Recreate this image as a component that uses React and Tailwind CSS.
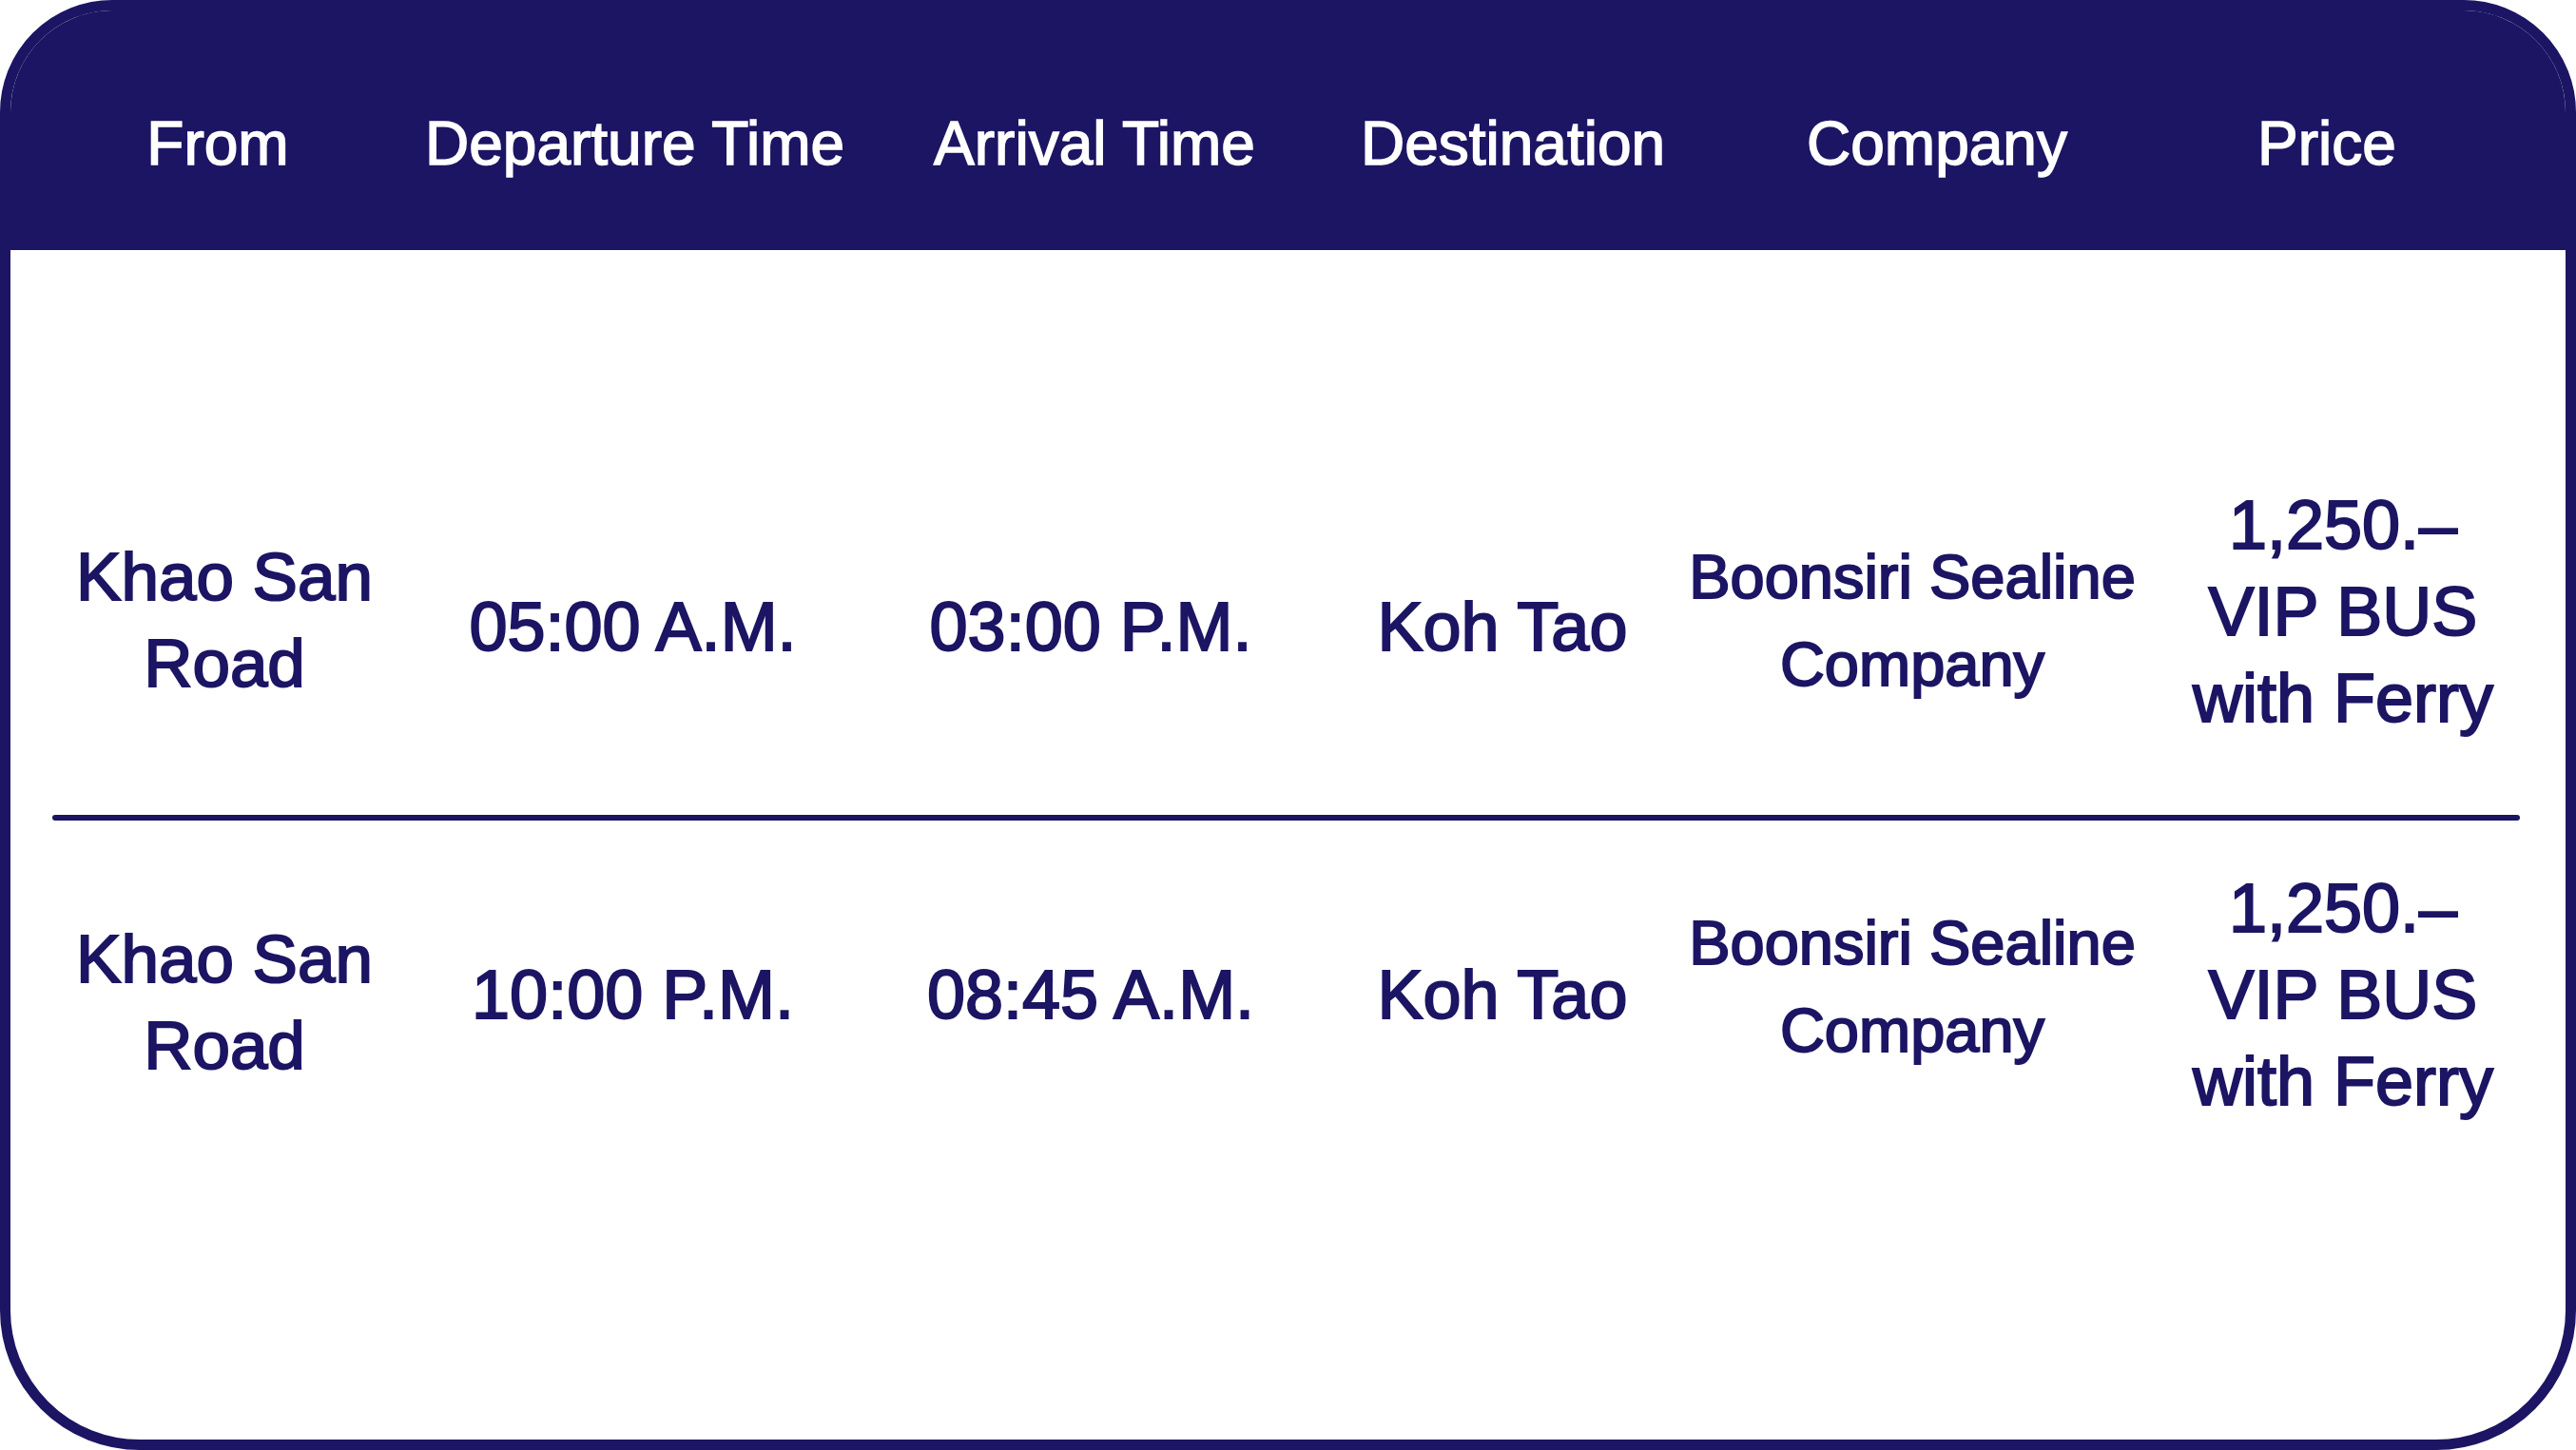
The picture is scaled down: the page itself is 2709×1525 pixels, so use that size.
import React from 'react';

const headers = ['From', 'Departure Time', 'Arrival Time', 'Destination', 'Company', 'Price'];

// small per-cell nudges so the rows sit where the design put them
const trips = [
  {
    from: ['Khao San', 'Road'],
    dep: '05:00 A.M.',
    arr: '03:00 P.M.',
    dest: 'Koh Tao',
    fromPad: 'pt-[4px]',
    singlePad: 'pt-[20px]',
    companyPad: 'pt-[6px]',
    pricePad: 'pb-[12px]',
  },
  {
    from: ['Khao San', 'Road'],
    dep: '10:00 P.M.',
    arr: '08:45 A.M.',
    dest: 'Koh Tao',
    fromPad: 'pt-[14px]',
    singlePad: 'pt-0',
    companyPad: 'pb-[18px]',
    pricePad: 'pb-0',
  },
];

function Lines({ items }) {
  return items.map((t, i) => (
    <div key={i} className="whitespace-nowrap">{t}</div>
  ));
}

function TripRow({ trip }) {
  return (
    <div className="grid h-[273px] grid-cols-[450px_409px_554px_312px_550px_356px] grid-rows-[273px] items-center text-center text-[72px] leading-[91px] text-[#1c1563] [-webkit-text-stroke:2px_#1c1563]">
      <div className={`text-[71px] ${trip.fromPad}`}>
        <Lines items={trip.from} />
      </div>
      <div className={`whitespace-nowrap ${trip.singlePad}`}>{trip.dep}</div>
      <div className={`whitespace-nowrap ${trip.singlePad}`}>{trip.arr}</div>
      <div className={`whitespace-nowrap ${trip.singlePad}`}>{trip.dest}</div>
      <div className={`text-[65px] leading-[92px] ${trip.companyPad}`}>
        <Lines items={['Boonsiri Sealine', 'Company']} />
      </div>
      <div className={trip.pricePad}>
        <Lines items={['1,250.–', 'VIP BUS', 'with Ferry']} />
      </div>
    </div>
  );
}

export default function App() {
  return (
    <div className="h-[1525px] w-[2709px] bg-white font-['Liberation_Sans',Arial,sans-serif]">
      <div className="flex h-full flex-col overflow-hidden rounded-t-[118px] rounded-b-[147px] border-[11px] border-[#1c1563] bg-white">
        <div className="grid h-[252px] shrink-0 grid-cols-[436px_441px_526px_354px_538px_282px] items-start bg-[#1c1563] pt-[108px] text-center text-[64px] leading-[64px] text-white [-webkit-text-stroke:1.5px_#ffffff]">
          {headers.map((h) => (
            <div key={h} className="whitespace-nowrap">{h}</div>
          ))}
        </div>

        <div className="flex flex-col pt-[250px]">
          <TripRow trip={trips[0]} />
          <div className="mb-[47px] ml-[44px] mr-[48px] mt-[71px] h-[6px] rounded-full bg-[#1c1563]" />
          <TripRow trip={trips[1]} />
        </div>
      </div>
    </div>
  );
}
